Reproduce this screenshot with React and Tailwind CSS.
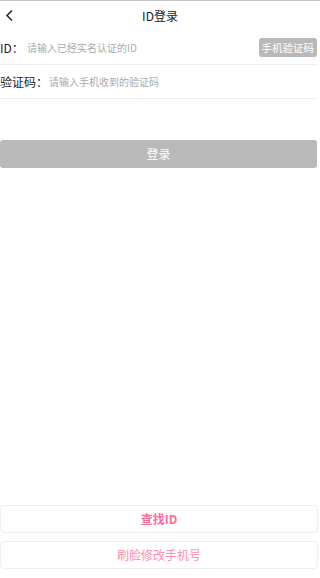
const font = { fontFamily: '"Noto Sans CJK SC", "Noto Sans", sans-serif' }

export default function App() {
  return (
    <div
      className="flex min-h-[578px] w-[320px] flex-col border-t border-[#c4c4c4] bg-white"
      style={font}
    >
      {/* header */}
      <div className="relative flex h-[30px] items-center justify-center">
        <svg
          className="absolute left-[5px] top-[8px]"
          width="9"
          height="13"
          viewBox="0 0 9 13"
          fill="none"
        >
          <path d="M7 1.5 L2 6.5 L7 11.5" stroke="#222" strokeWidth="1.5" />
        </svg>
        <span className="text-[12px] text-[#222]">ID登录</span>
      </div>

      {/* ID row */}
      <div className="mr-[2px] flex h-[34px] items-center border-b border-[#eeeeee]">
        <span className="w-[27px] text-[12px] text-[#222]">ID：</span>
        <span className="flex-1 text-[10px] text-[#aaaaaa]">请输入已经实名认证的ID</span>
        <button className="mr-[1px] h-[19px] rounded-[3px] bg-[#b9b9b9] px-[3px] text-[10.5px] leading-[19px] text-white">
          手机验证码
        </button>
      </div>

      {/* code row */}
      <div className="mr-[2px] flex h-[34px] items-center border-b border-[#eeeeee]">
        <span className="w-[49px] text-[12px] text-[#222]">验证码：</span>
        <span className="flex-1 text-[10px] text-[#aaaaaa]">请输入手机收到的验证码</span>
      </div>

      <button className="mr-[3px] mt-[41px] h-[28px] rounded-[3px] bg-[#b9b9b9] text-[12px] text-white">
        登录
      </button>

      <div className="mt-auto flex flex-col gap-[8px] pb-[9px]">
        <button className="mr-[2px] h-[28px] rounded-[4px] border border-[#eeeeee] text-[12px] font-bold text-[#ff6b9a]">
          查找ID
        </button>
        <button className="mr-[2px] h-[28px] rounded-[4px] border border-[#eeeeee] text-[12px] text-[#ff8db0]">
          刷脸修改手机号
        </button>
      </div>
    </div>
  )
}
